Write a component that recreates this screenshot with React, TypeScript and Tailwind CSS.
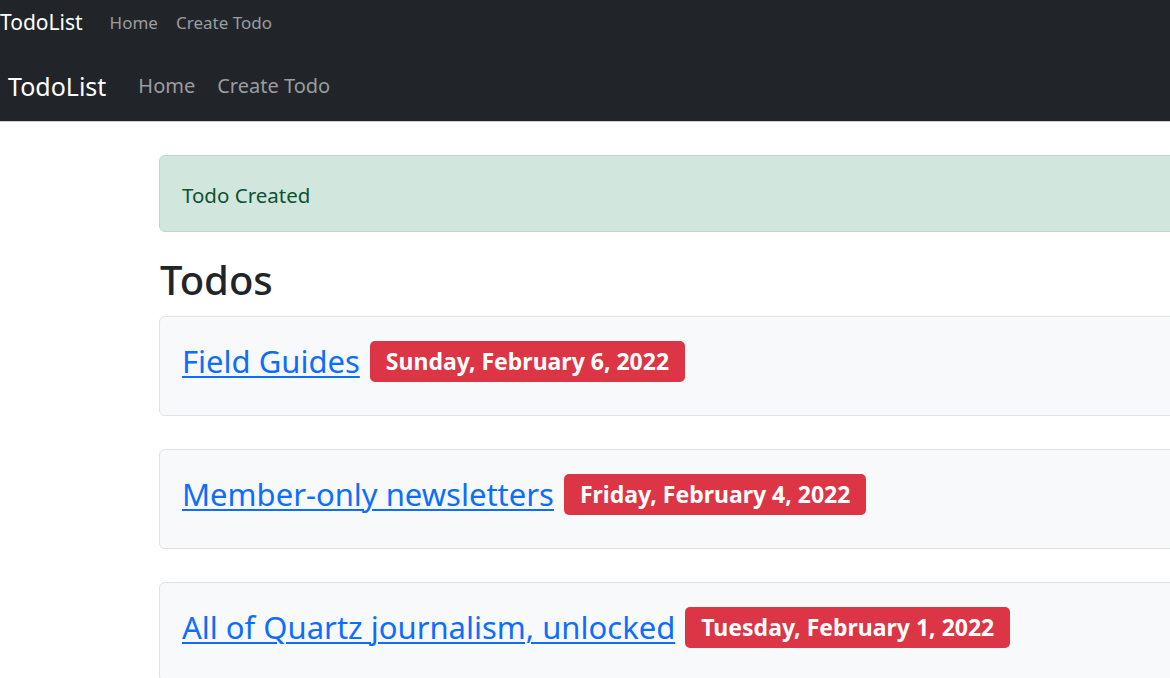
const todos = [
  { title: "Field Guides", date: "Sunday, February 6, 2022" },
  { title: "Member-only newsletters", date: "Friday, February 4, 2022" },
  { title: "All of Quartz journalism, unlocked", date: "Tuesday, February 1, 2022" },
];

const App = () => {
  return (
    <div className="min-h-screen bg-white font-['Noto_Sans',sans-serif] text-[#212529] overflow-hidden">
      {/* Small navbar */}
      <nav className="h-[45px] bg-[#212529] flex items-center">
        <span className="text-[21px] text-white leading-none">TodoList</span>
        <a className="ml-[27px] text-[17px] text-[#9a9da0] leading-none">Home</a>
        <a className="ml-[18px] text-[17px] text-[#9a9da0] leading-none">Create Todo</a>
      </nav>

      {/* Main navbar */}
      <nav className="h-[77px] bg-[#212529] flex items-center pl-[8px] pt-[6px] border-b border-[#c9cccf]">
        <span className="text-[25px] text-white leading-none">TodoList</span>
        <a className="ml-[32px] text-[20px] text-[#9a9da0] leading-none">Home</a>
        <a className="ml-[22px] text-[20px] text-[#9a9da0] leading-none">Create Todo</a>
      </nav>

      <main className="pl-[159px] pt-[33px]">
        <div className="w-[1100px] h-[77px] flex items-center pl-[22px] pt-[3px] bg-[#d1e7dd] border border-[#badbcc] rounded-[6px] text-[#0f5132] text-[20.5px]">
          Todo Created
        </div>

        <h1 className="mt-[24px] ml-[1px] text-[40px] font-medium leading-[1.2] mb-[12px]">Todos</h1>

        <div className="flex flex-col gap-[33px]">
          {todos.map((t, i) => (
            <div
              key={i}
              className="w-[1100px] h-[100px] flex items-center pl-[22px] pb-[9px] bg-[#f8f9fa] border border-[#dee2e6] rounded-[6px]"
            >
              <a className="text-[31px] text-[#0d6efd] underline underline-offset-[3px] decoration-[2px] leading-none">
                {t.title}
              </a>
              <span className="ml-[10px] h-[41px] px-[16px] flex items-center bg-[#dc3545] text-white font-bold text-[23px] rounded-[5px] leading-none">
                {t.date}
              </span>
            </div>
          ))}
        </div>
      </main>
    </div>
  );
};

export default App;
